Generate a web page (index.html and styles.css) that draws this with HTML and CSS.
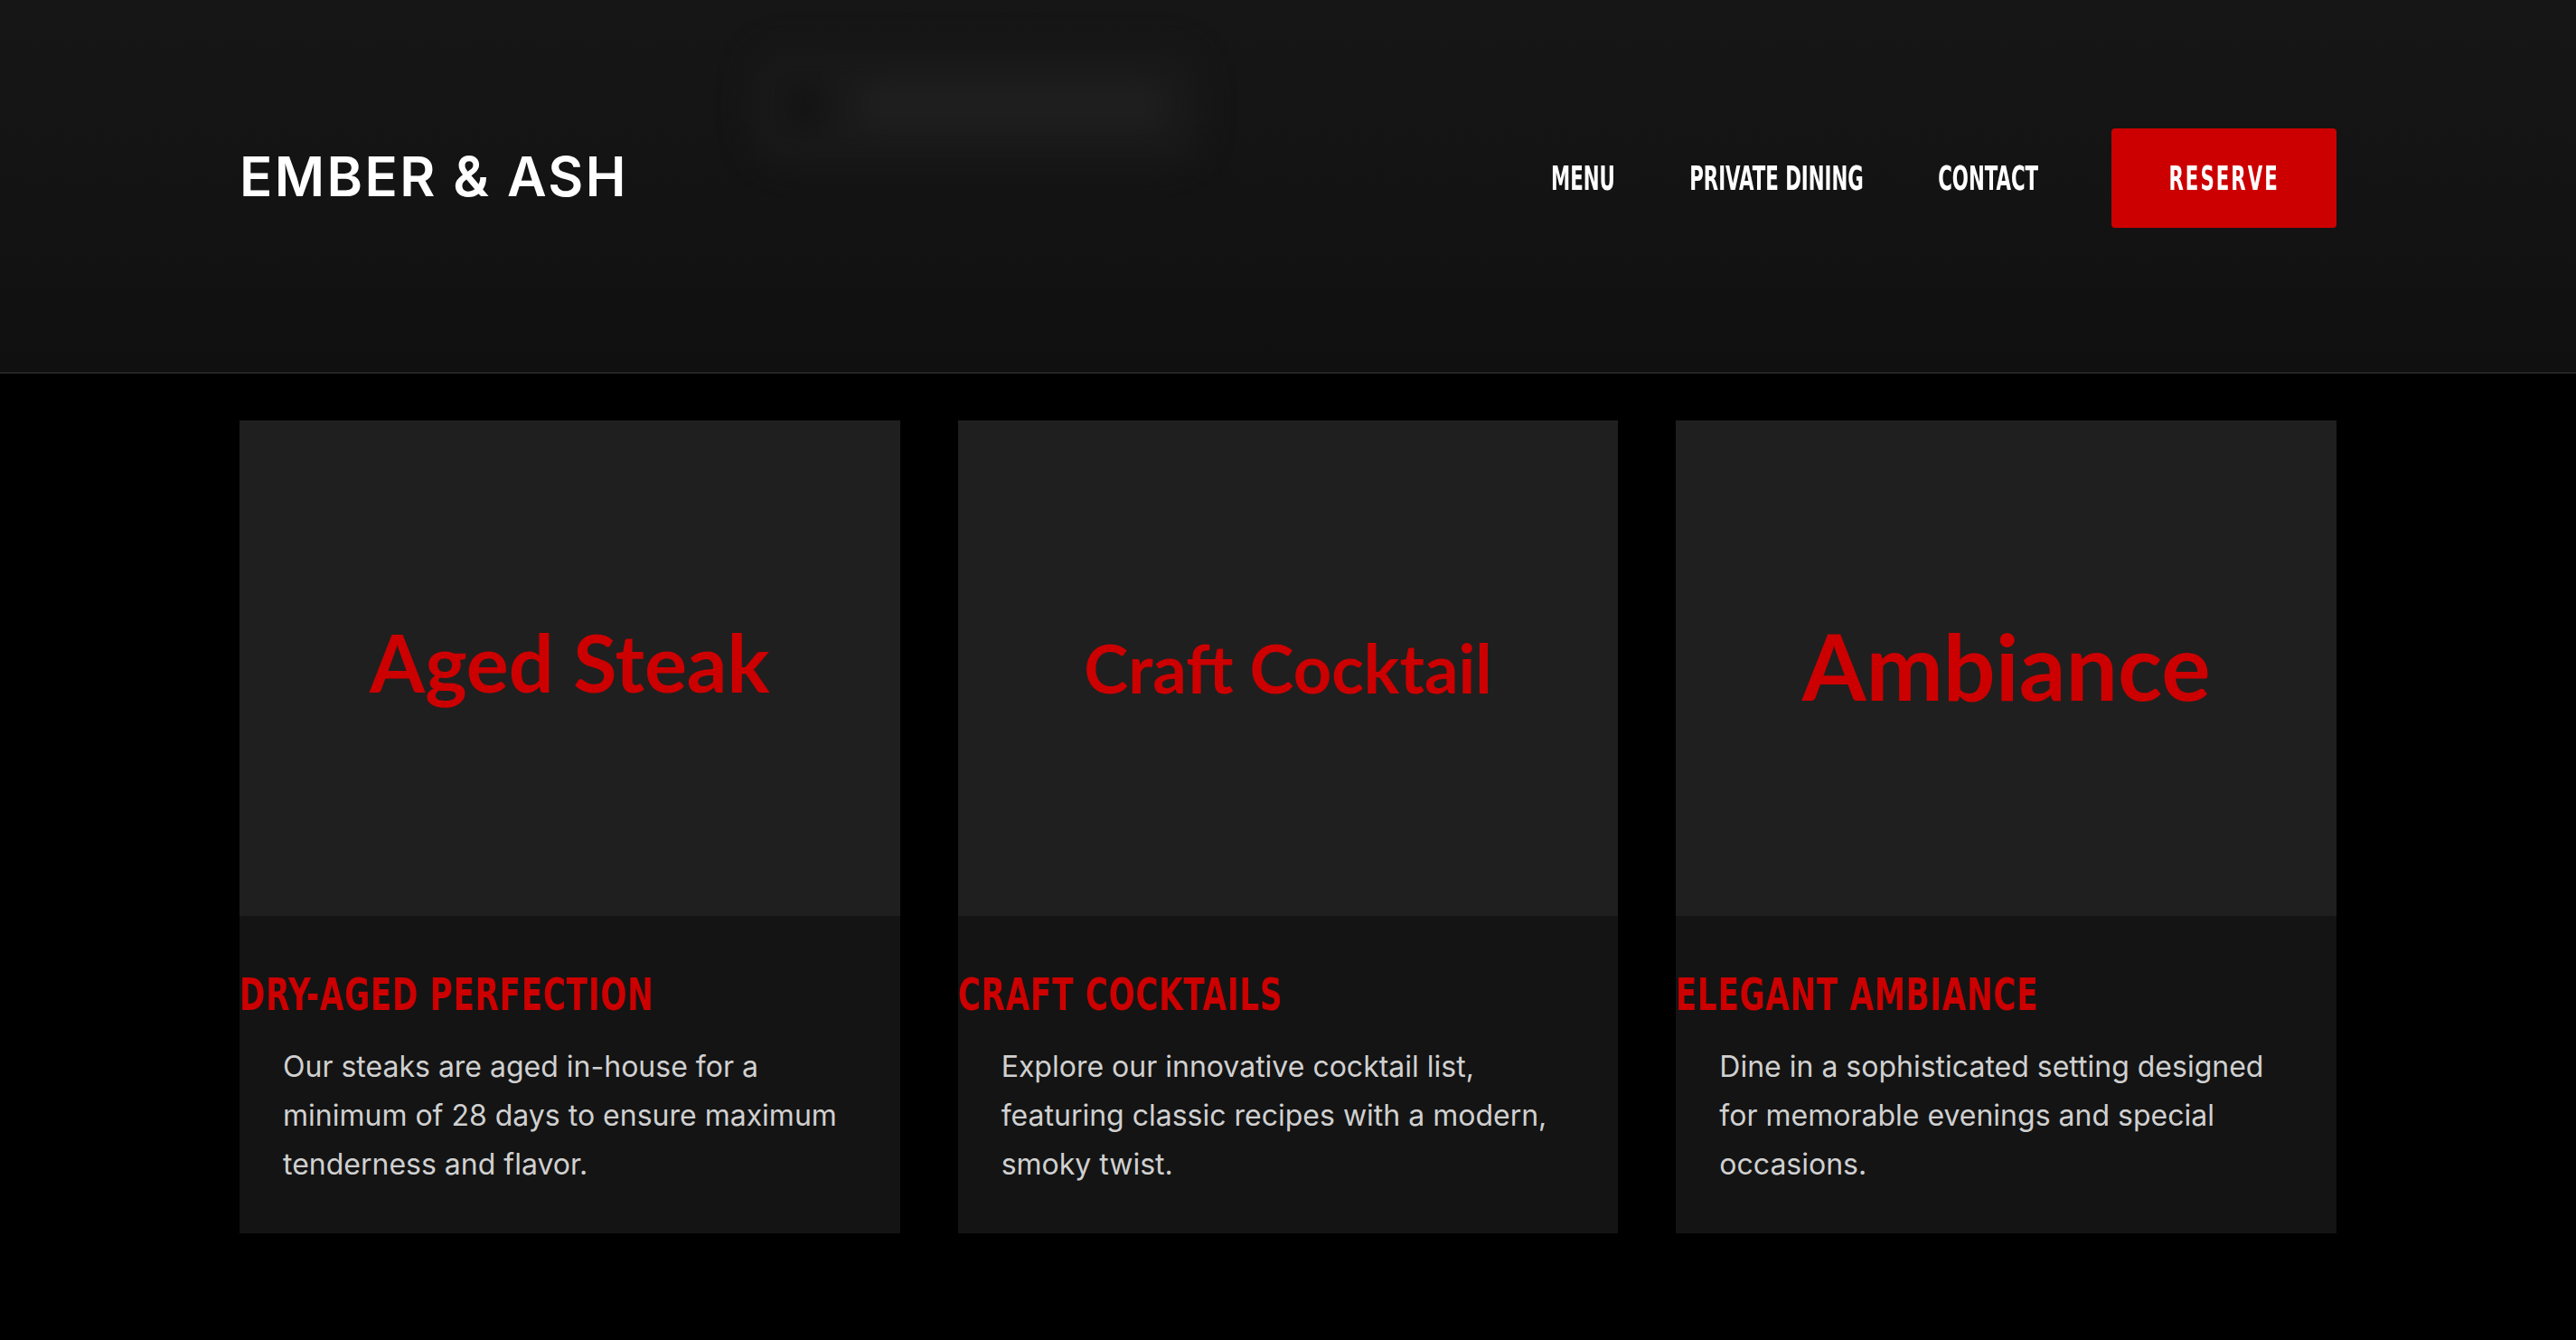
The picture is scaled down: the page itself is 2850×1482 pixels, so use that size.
FILE: index.html
```html
<!DOCTYPE html>
<html lang="en">
<head>
<meta charset="utf-8">
<title>Ember &amp; Ash</title>
<link rel="stylesheet" href="styles.css">
</head>
<body>
<header class="site-header">
  <div class="ghost" aria-hidden="true"><span class="ghost-dot"></span><span class="ghost-bar"></span></div>
  <div class="header-inner">
    <a class="logo" href="#">EMBER &amp; ASH</a>
    <nav class="nav">
      <a class="nav-link nav-menu" href="#"><span class="squeeze">MENU</span></a>
      <a class="nav-link nav-private" href="#"><span class="squeeze">PRIVATE DINING</span></a>
      <a class="nav-link nav-contact" href="#"><span class="squeeze">CONTACT</span></a>
      <a class="btn-reserve" href="#"><span class="squeeze">RESERVE</span></a>
    </nav>
  </div>
</header>
<main class="features">
  <article class="card">
    <div class="card-media"><span class="media-label label-steak">Aged Steak</span></div>
    <div class="card-body">
      <h3 class="card-title"><span class="title-squeeze">DRY-AGED PERFECTION</span></h3>
      <p class="card-text">Our steaks are aged in-house for a minimum of 28 days to ensure maximum tenderness and flavor.</p>
    </div>
  </article>
  <article class="card">
    <div class="card-media"><span class="media-label label-cocktail">Craft Cocktail</span></div>
    <div class="card-body">
      <h3 class="card-title"><span class="title-squeeze">CRAFT COCKTAILS</span></h3>
      <p class="card-text">Explore our innovative cocktail list, featuring classic recipes with a modern, smoky twist.</p>
    </div>
  </article>
  <article class="card">
    <div class="card-media"><span class="media-label label-ambiance">Ambiance</span></div>
    <div class="card-body">
      <h3 class="card-title"><span class="title-squeeze">ELEGANT AMBIANCE</span></h3>
      <p class="card-text">Dine in a sophisticated setting designed for memorable evenings and special occasions.</p>
    </div>
  </article>
</main>
</body>
</html>
```
FILE: styles.css
```css
* { box-sizing: border-box; }
html, body { margin: 0; padding: 0; }
body {
  background: #000;
  font-family: Inter, "Noto Sans", sans-serif;
  color: #fff;
  min-height: 1482px;
}
a { text-decoration: none; color: inherit; }

.site-header {
  position: relative;
  height: 413px;
  background: linear-gradient(180deg, #161616 0%, #131313 60%, #101010 100%);
  border-bottom: 1px solid #383838;
  overflow: hidden;
}
.ghost {
  position: absolute;
  left: 830px;
  top: 52px;
  width: 500px;
  height: 130px;
  border-radius: 40px;
  background: #191919;
  filter: blur(16px);
  display: flex;
  align-items: center;
  padding: 0 40px;
  gap: 40px;
}
.ghost-dot {
  width: 40px; height: 60px; border-radius: 50%;
  background: #121212;
}
.ghost-bar {
  flex: 1; height: 50px; border-radius: 25px;
  background: #1f1f1f;
}
.header-inner {
  position: relative;
  display: flex;
  align-items: center;
  justify-content: space-between;
  height: 110px;
  margin-top: 142px;
  padding: 0 265px;
}
.logo {
  font-family: Inter, sans-serif;
  font-weight: 600;
  font-size: 60px;
  letter-spacing: 0.04em;
  color: #fff;
  line-height: 1;
  margin-top: -4px;
}
.nav {
  display: flex;
  align-items: center;
  gap: 81px;
}
.nav-link, .btn-reserve {
  display: flex;
  justify-content: center;
  align-items: center;
  font-family: "DejaVu Sans Condensed", "DejaVu Sans", sans-serif;
  font-weight: 700;
  font-size: 37px;
  color: #fff;
  line-height: 1;
  white-space: nowrap;
}
.squeeze {
  display: inline-block;
  transform: scaleX(0.64);
  transform-origin: center;
}
.nav-menu { width: 69px; }
.nav-private { width: 196px; }
.nav-contact { width: 111px; }
.btn-reserve {
  width: 249px;
  height: 110px;
  background: #cc0000;
  border-radius: 4px;
  letter-spacing: 0.085em;
}

.features {
  display: grid;
  grid-template-columns: repeat(3, 1fr);
  gap: 64px;
  padding: 52px 265px 0;
}
.card { background: #141414; }
.card-media {
  height: 548px;
  background: #1f1f1f;
  display: flex;
  align-items: center;
  justify-content: center;
}
.media-label {
  font-family: Lato, sans-serif;
  font-weight: 700;
  color: #cc0000;
  line-height: 1;
}
.label-steak { font-size: 88px; margin-bottom: 14px; }
.label-cocktail { font-size: 74px; }
.label-ambiance { font-size: 102px; margin-bottom: 6px; }
.card-body {
  padding: 59px 0 49px;
}
.card-title {
  margin: 0 0 22px;
  font-family: "DejaVu Sans Condensed", "DejaVu Sans", sans-serif;
  font-weight: 700;
  font-size: 49px;
  line-height: 1.2;
  color: #cc0000;
  white-space: nowrap;
}
.title-squeeze {
  display: inline-block;
  transform: scaleX(0.775);
  transform-origin: left center;
  letter-spacing: 0.02em;
}
.card-text {
  margin: 0;
  padding: 0 48px;
  font-family: Inter, sans-serif;
  font-size: 32px;
  line-height: 54px;
  color: #d0d0d0;
}
```
